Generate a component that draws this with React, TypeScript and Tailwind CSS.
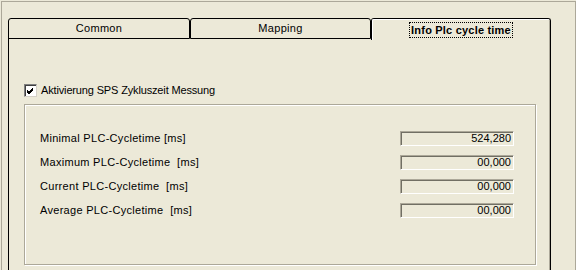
import React from "react";

const font = { fontFamily: '"Liberation Sans", Arial, sans-serif' };

function Field({ value }: { value: string }) {
  return (
    <div className="w-[114px] h-[15px] border border-t-[#ACA899] border-l-[#ACA899] border-b-white border-r-white shadow-[inset_1px_1px_0_#716F64] flex items-center justify-end pr-[2px] text-[11px] leading-none text-black">
      {value}
    </div>
  );
}

const rows = [
  ["Minimal PLC-Cycletime [ms]", "524,280"],
  ["Maximum PLC-Cycletime  [ms]", "00,000"],
  ["Current PLC-Cycletime  [ms]", "00,000"],
  ["Average PLC-Cycletime  [ms]", "00,000"],
];

export default function App() {
  return (
    <div className="w-[576px] h-[270px] bg-[#ECE9D8] overflow-hidden text-black" style={font}>
      <div className="ml-px mt-px w-[575px] h-[269px] border-t border-l border-r border-[#ACA899] pl-[6px] pt-[16px]">
        <div className="w-[543px] flex flex-col">
          {/* tabs */}
          <div className="flex h-[21px] items-start">
            <div className="w-[182px] h-[21px] border border-black rounded-t-[3px] flex items-center justify-center text-[11px] tracking-[0.3px]">
              Common
            </div>
            <div className="w-[181px] h-[21px] border border-black rounded-t-[3px] flex items-center justify-center text-[11px] tracking-[0.3px]">
              Mapping
            </div>
            <div className="w-[180px] h-[22px] border-t border-l border-r border-black rounded-t-[3px] bg-[#ECE9D8] relative z-10">
              <div className="h-full border-t border-l border-white border-r border-r-[#ACA899] rounded-t-[2px] flex items-start justify-center pt-[2px]">
                <span className="border border-dotted border-black px-[1px] h-[16px] flex items-center text-[11px] font-bold tracking-[0.2px]">
                  Info Plc cycle time
                </span>
              </div>
            </div>
          </div>
          {/* panel */}
          <div className="-mt-px h-[260px] border-l border-r border-black">
            <div className="h-full border-r border-[#ACA899] pl-[15px] pt-[46px]">
              <div className="flex items-center h-[13px] gap-[4px]">
                <div className="w-[13px] h-[13px] bg-white border border-t-[#808080] border-l-[#808080] border-b-[#D4D0C8] border-r-[#D4D0C8] shadow-[inset_1px_1px_0_#404040] flex items-center justify-center">
                  <svg width="9" height="9" viewBox="0 0 9 9">
                    <path d="M1 4 L3 6 L7 2 M1 5 L3 7 L7 3 M1 6 L3 8 L7 4" stroke="#000" strokeWidth="1" fill="none" />
                  </svg>
                </div>
                <span className="text-[11px] tracking-[-0.15px]">Aktivierung SPS Zykluszeit Messung</span>
              </div>
              <div className="mt-[7px] w-[512px] h-[161px] border border-[#ACA899] shadow-[inset_1px_1px_0_#fff,1px_1px_0_#fff] pl-[15px] pt-[26px]">
                <div className="flex flex-col gap-[9px]">
                  {rows.map(([label, value]) => (
                    <div key={label} className="flex items-center h-[15px]">
                      <span className="w-[360px] text-[11px] tracking-[0.3px] whitespace-pre">{label}</span>
                      <Field value={value} />
                    </div>
                  ))}
                </div>
              </div>
            </div>
          </div>
        </div>
      </div>
    </div>
  );
}
